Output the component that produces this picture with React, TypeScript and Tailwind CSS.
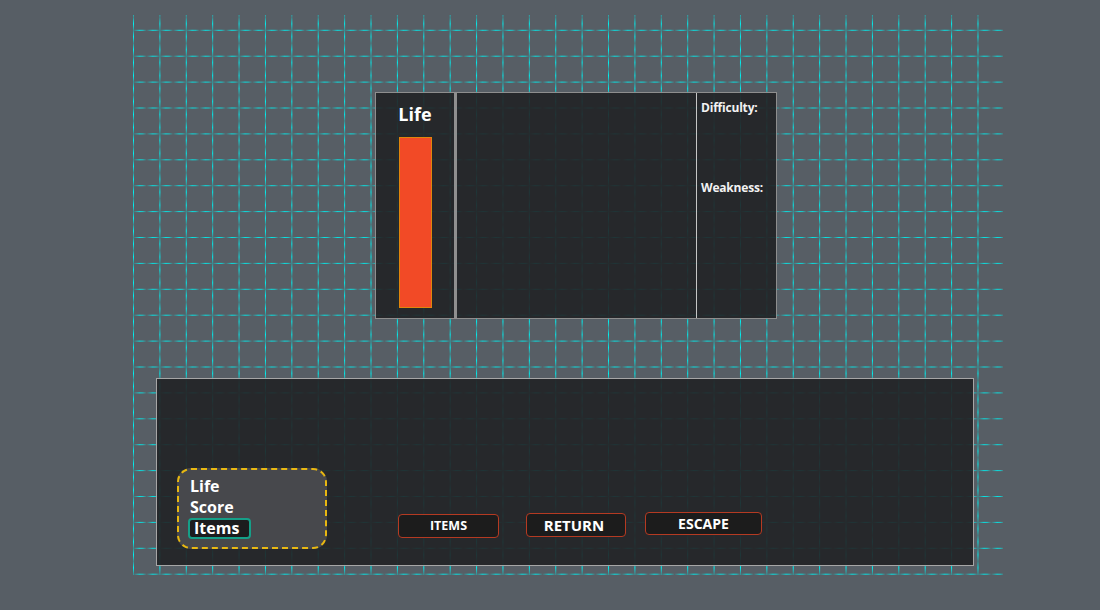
import React from 'react';

const COLS = Array.from({ length: 33 }, (_, i) => 0.5 + 26.39 * i);
const ROWS = Array.from({ length: 22 }, (_, k) => 15.3 + 25.9 * k);

function GridBackdrop() {
  return (
    <svg className="absolute inset-0" width={870} height={560}>
      <defs>
        <linearGradient id="hg" gradientUnits="userSpaceOnUse" x1={0.5} y1={0} x2={13.695} y2={0} spreadMethod="repeat">
          <stop offset="0" stopColor="#00f2f2" stopOpacity="0.05" />
          <stop offset="0.45" stopColor="#00f2f2" stopOpacity="0.9" />
          <stop offset="0.7" stopColor="#00f2f2" stopOpacity="0.75" />
          <stop offset="1" stopColor="#00f2f2" stopOpacity="0.05" />
        </linearGradient>
        <linearGradient id="vg" gradientUnits="userSpaceOnUse" x1={0} y1={15.3} x2={0} y2={28.25} spreadMethod="repeat">
          <stop offset="0" stopColor="#00f2f2" stopOpacity="0.3" />
          <stop offset="0.5" stopColor="#00f2f2" stopOpacity="1" />
          <stop offset="1" stopColor="#00f2f2" stopOpacity="0.3" />
        </linearGradient>
      </defs>
      {ROWS.map((y) => (
        <rect key={'h' + y} x={0} y={y - 0.5} width={870} height={1} fill="url(#hg)" />
      ))}
      {COLS.map((x) => (
        <rect key={'v' + x} x={x - 0.5} y={0} width={1} height={560} fill="url(#vg)" />
      ))}
    </svg>
  );
}

function StatusPanel() {
  return (
    <div className="ml-[242px] mt-[77px] flex h-[227px] w-[402px] border border-[#8e8e8e] bg-[#212225]/90">
      <div className="flex w-[78px] flex-col items-center pt-[9px]">
        <span className="text-[18px] font-bold leading-[24px] text-white">Life</span>
        <div className="mt-[11px] h-[171px] w-[33px] border border-[#e0860c] bg-[#f24a26]" />
      </div>
      <div className="w-[3px] bg-[#8f8f8f]" />
      <div className="flex-1" />
      <div className="w-[1px] bg-[#c6c6c6]" />
      <div className="flex w-[79px] flex-col pl-[4px] pt-[7px] text-[12px] font-bold leading-[16px] tracking-[-0.2px] text-[#f2f2f2]">
        <span>Difficulty:</span>
        <span className="mt-[64px]">Weakness:</span>
      </div>
    </div>
  );
}

function MenuPanel() {
  return (
    <div className="ml-[23px] mt-[59px] flex h-[188px] w-[818px] items-end border border-[#a6a6a6] bg-[#212225]/90 pb-[16px] pl-[20px]">
      <div className="h-[81px] w-[150px] rounded-[14px] border-2 border-dashed border-[#e8b812] bg-[#47484c] pl-[9px] pt-[6px] text-[16px] font-bold text-white">
        <div className="pl-[2px] leading-[21px]">Life</div>
        <div className="pl-[2px] leading-[21px]">Score</div>
        <div className="w-fit rounded-[4px] border-2 border-[#159f88] bg-[#1c1c1e] pl-[4px] pr-[10px] leading-[17px]">
          Items
        </div>
      </div>
      <button className="mb-[11px] ml-[71px] h-[24px] w-[101px] rounded-[4px] border border-[#b53a22] bg-[#1c1c1c] text-[12.5px] font-bold text-white">
        ITEMS
      </button>
      <button className="mb-[12px] ml-[27px] h-[24px] w-[100px] rounded-[4px] border border-[#b53a22] bg-[#1c1c1c] pb-[2px] pr-[4px] text-[15px] font-bold text-white">
        RETURN
      </button>
      <button className="mb-[14px] ml-[19px] h-[23px] w-[117px] rounded-[4px] border border-[#b53a22] bg-[#1c1c1c] text-[14px] font-bold text-white">
        ESCAPE
      </button>
    </div>
  );
}

export default function App() {
  return (
    <div className="h-[610px] w-[1100px] overflow-hidden bg-[#575e65] pl-[133px] pt-[15px] font-['Open_Sans',sans-serif]">
      <div className="relative h-[560px] w-[870px]">
        <GridBackdrop />
        <div className="relative flex flex-col">
          <StatusPanel />
          <MenuPanel />
        </div>
      </div>
    </div>
  );
}
